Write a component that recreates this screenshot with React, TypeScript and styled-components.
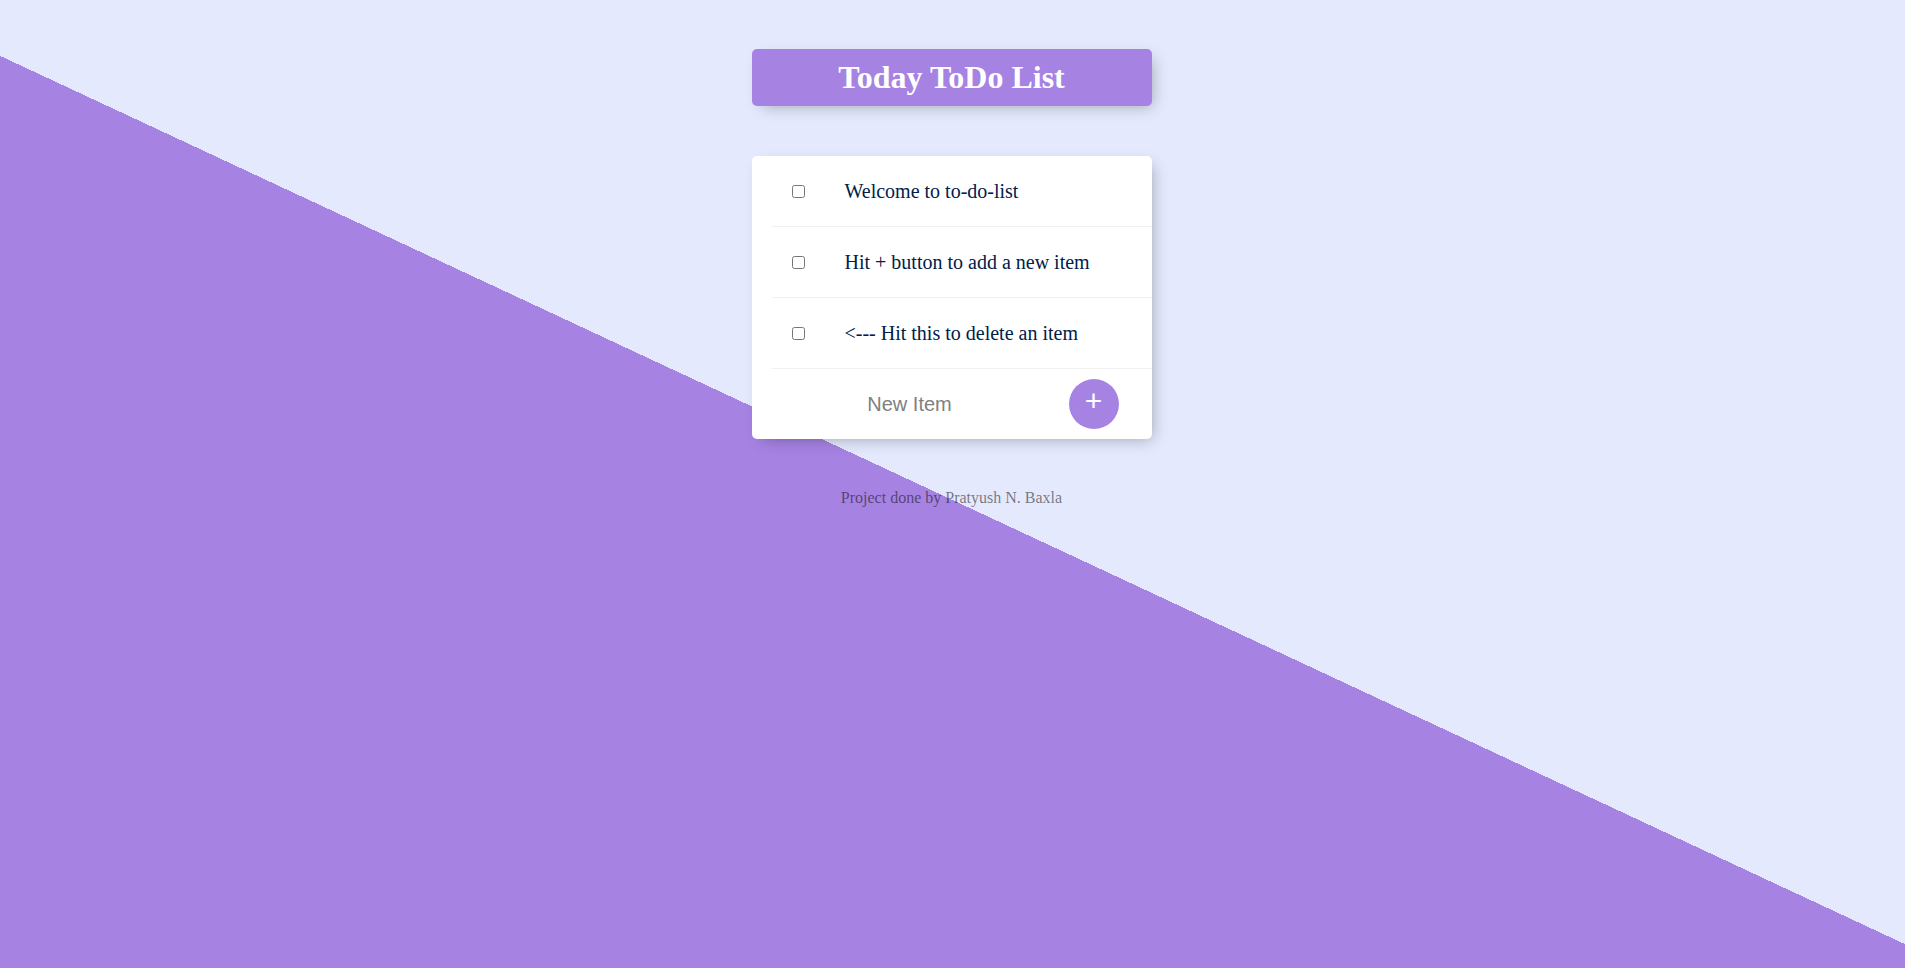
import React from "react";
import styled, { createGlobalStyle } from "styled-components";

const GlobalStyle = createGlobalStyle`
  html {
    background-color: #E4E9FD;
    background-image: linear-gradient(25deg, #A683E3 50%, #E4E9FD 50%);
    min-height: 1000px;
    overflow: hidden;
  }
  body {
    margin: 0;
    font-family: "Liberation Serif", "Times New Roman", serif;
  }
`;

const Page = styled.div`
  padding-top: 49px;
  padding-right: 2px;
`;

const Box = styled.div`
  max-width: 400px;
  margin: 0 auto;
  background: #fff;
  border-radius: 5px;
  box-shadow: 5px 5px 15px -5px rgba(0, 0, 0, 0.3);
`;

const HeadingBox = styled(Box)`
  background-color: #A683E3;
  text-align: center;
`;

const ListBox = styled(Box)`
  margin-top: 50px;
`;

const Title = styled.h1`
  margin: 0;
  padding: 10px;
  font-size: 32px;
  font-weight: bold;
  color: #fff;
  font-family: "Liberation Serif", "Times New Roman", serif;
`;

const RowForm = styled.form`
  margin-left: 20px;
  text-align: center;
`;

const Item = styled.div<{ $last?: boolean }>`
  min-height: 70px;
  display: flex;
  align-items: center;
  border-bottom: ${(p) => (p.$last ? "0" : "1px solid #F1F1F1")};
`;

const AddRow = styled(Item)`
  justify-content: space-between;
  padding-right: 33px;
`;

const Check = styled.input`
  margin: 20px;
  width: 13px;
  height: 13px;
`;

const ItemText = styled.p`
  margin: 0;
  padding: 20px;
  font-size: 20px;
  font-weight: 200;
  color: #00204a;
  font-family: "Liberation Serif", "Times New Roman", serif;
`;

const NewItemInput = styled.input`
  box-sizing: border-box;
  width: 268px;
  height: 60px;
  border: none;
  padding: 1px 2px 1px 10px;
  text-align: center;
  font-size: 20px;
  font-weight: 200;
  font-family: "Liberation Sans", Arial, sans-serif;
  background: transparent;
  &::placeholder {
    color: grey;
    opacity: 1;
  }
  &:focus {
    outline: none;
    box-shadow: inset 0 -3px 0 0 #A683E3;
  }
`;

const AddButton = styled.button`
  min-height: 50px;
  width: 50px;
  border-radius: 50%;
  border: 0;
  background-color: #A683E3;
  color: #fff;
  font-size: 30px;
  padding: 0 0 6px 0;
  font-family: "Liberation Sans", Arial, sans-serif;
  line-height: 1;
  cursor: pointer;
`;

const Footer = styled.footer`
  margin-top: 50px;
  text-align: center;
  color: rgba(0, 0, 0, 0.5);
  font-size: 16px;
`;

const items = [
  "Welcome to to-do-list",
  "Hit + button to add a new item",
  "<--- Hit this to delete an item",
];

export default function App() {
  return (
    <>
      <GlobalStyle />
      <Page>
        <HeadingBox>
          <Title>Today ToDo List</Title>
        </HeadingBox>
        <ListBox>
          {items.map((t) => (
            <RowForm key={t} onSubmit={(e) => e.preventDefault()}>
              <Item>
                <Check type="checkbox" name="checkbox" />
                <ItemText>{t}</ItemText>
              </Item>
            </RowForm>
          ))}
          <RowForm onSubmit={(e) => e.preventDefault()}>
            <AddRow $last>
              <NewItemInput type="text" name="newItem" placeholder="New Item" autoComplete="off" />
              <AddButton type="submit">+</AddButton>
            </AddRow>
          </RowForm>
        </ListBox>
        <Footer>Project done by Pratyush N. Baxla</Footer>
      </Page>
    </>
  );
}
